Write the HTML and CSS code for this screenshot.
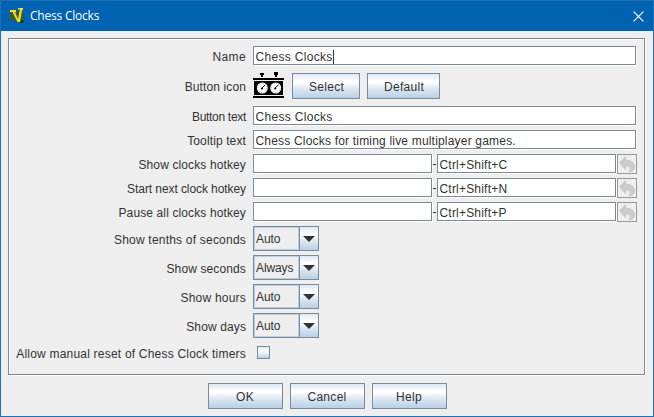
FILE: index.html
```
<!DOCTYPE html>
<html lang="en">
<head>
<meta charset="utf-8">
<title>Chess Clocks</title>
<link rel="stylesheet" href="styles.css">
</head>
<body>
<svg class="defs" width="0" height="0" aria-hidden="true">
  <symbol id="undo" viewBox="0 0 18 18"><path d="M1.500 8 7.500 1.500V5C13 5 16.500 7.500 16.500 12c0 2.300-1.200 4.300-3.500 4.500h-2.500c1.500-1 2-2.200 1.700-3.500-.3-1.300-1.700-2-4.700-2v3.500z" stroke="#bebebe" stroke-width=".6"/></symbol>
</svg>
<div class="window">
  <header class="titlebar">
    <svg class="logo" width="16" height="17" viewBox="0 0 16 17">
      <path d="M0 8 2 6l5-1 4-1 3 2 1 4-2 4-3 2-5-3-3 0-2-3z" fill="#365b3b"/>
      <path d="m4 4 5 10 3 2 3-1-1-2-3 1z" fill="#27302b"/>
      <path d="M1 3h6v2H6l3 7 2-9.500H9V1h5v2h-1l-2 12H8.500L3.500 5H1z" fill="#ffdf13"/>
    </svg>
    <span class="title">Chess Clocks</span>
    <svg class="close" width="11" height="11" viewBox="0 0 11 11"><path d="m.6.6 9.800 9.800M10.400.6.6 10.400" stroke="#fff" stroke-width="1.200"/></svg>
  </header>
  <main class="panel">
    <div class="row"><label class="wide">Name</label><div class="field caret"><span>Chess Clocks</span></div></div>
    <div class="row icon-row"><label>Button icon</label>
      <svg class="clock" width="32" height="26" viewBox="0 0 32 26">
        <path d="M7 0h4v2h-1v2H8V2H7zM21-1h4v3h-1v2h-2V2h-1zM0 5h31v2H0zM1 8h29v14H1zM0 23h31v2H0z" fill="#000"/>
        <circle cx="9.300" cy="15" r="5.500" fill="#fff"/><circle cx="22.700" cy="15" r="5.500" fill="#fff"/>
        <path d="m9 15 3-3M22.200 15l3-3" stroke="#000" stroke-width="1"/>
        <circle cx="9" cy="15.500" r="1.100" fill="#000"/><circle cx="22.200" cy="15.500" r="1.100" fill="#000"/>
        <circle cx="9.300" cy="15" r="4.500" fill="none" stroke="#777" stroke-width=".8" stroke-dasharray=".7 1.656"/>
        <circle cx="22.700" cy="15" r="4.500" fill="none" stroke="#777" stroke-width=".8" stroke-dasharray=".7 1.656"/>
      </svg>
      <div class="button select">Select</div><div class="button default">Default</div></div>
    <div class="row"><label class="tight">Button text</label><div class="field"><span>Chess Clocks</span></div></div>
    <div class="row"><label>Tooltip text</label><div class="field"><span class="long">Chess Clocks for timing live multiplayer games.</span></div></div>
    <div class="row"><label>Show clocks hotkey</label><div class="field key"></div><i>-</i><div class="field key"><span>Ctrl+Shift+C</span></div><div class="undo"><svg><use href="#undo"/></svg></div></div>
    <div class="row"><label class="snug">Start next clock hotkey</label><div class="field key"></div><i>-</i><div class="field key"><span>Ctrl+Shift+N</span></div><div class="undo"><svg><use href="#undo"/></svg></div></div>
    <div class="row"><label>Pause all clocks hotkey</label><div class="field key"></div><i>-</i><div class="field key"><span>Ctrl+Shift+P</span></div><div class="undo"><svg><use href="#undo"/></svg></div></div>
    <div class="row combo-row"><label class="loose">Show tenths of seconds</label><div class="combo"><span>Auto</span><b></b></div></div>
    <div class="row combo-row"><label>Show seconds</label><div class="combo"><span>Always</span><b></b></div></div>
    <div class="row combo-row"><label class="loose">Show hours</label><div class="combo"><span>Auto</span><b></b></div></div>
    <div class="row combo-row"><label>Show days</label><div class="combo"><span>Auto</span><b></b></div></div>
    <div class="row check-row"><label class="loose">Allow manual reset of Chess Clock timers</label><div class="check"></div></div>
  </main>
  <footer><div class="button">OK</div><div class="button">Cancel</div><div class="button">Help</div></footer>
</div>
</body>
</html>
```
FILE: styles.css
```
* { box-sizing: border-box; }
body { margin: 0; }
.defs { display: none; }
.window {
  width: 654px; height: 417px;
  border: 1px solid #1a73b8; border-top: 0;
  background: #eee; color: #333;
  font: 12px/14px "Liberation Sans", Arial, sans-serif;
  letter-spacing: .3px;
  white-space: nowrap;
}
.titlebar {
  height: 31px; border-top: 1px solid #1a73b8; background: #0063b1; color: #fff;
  display: flex; align-items: center; padding: 0 9px 0 8px;
}
.logo { margin: -2px 5px 0 0; }
.title { font: 12px/16px "Open Sans", sans-serif; letter-spacing: -.22px; flex: 1; }
.panel {
  margin: 7px 8px 0 7px; height: 337px; padding: 7px 0 0;
  border: 1px solid #7a8a99; box-shadow: 1px 1px 0 #fff, inset 1px 1px 0 #fff;
}
.row { display: flex; height: 19px; margin-bottom: 5px; align-items: center; }
label { width: 237px; margin-right: 7px; padding-top: 2px; text-align: right; letter-spacing: .12px; }
.wide { letter-spacing: .35px; }
.loose { letter-spacing: .21px; }
.snug { letter-spacing: -.08px; }
.tight { letter-spacing: -.3px; }
.field {
  width: 383px; height: 19px; border: 1px solid #7a8a99; background: #fff;
  box-shadow: 1px 1px 0 #fff; padding: 3px 0 0 1.500px; letter-spacing: .32px;
}
.field span { display: inline-block; height: 14px; }
.caret span { border-right: 1px solid #333; }
.field .long { letter-spacing: .19px; }
.key { width: 179px; letter-spacing: .2px; }
i { width: 5px; font-style: normal; text-align: center; letter-spacing: 0; padding-top: 1px; }
.undo { width: 20px; height: 20px; border: 1px solid #999; margin: 1px 0 0 1px; background: #eee; }
.undo svg { display: block; width: 18px; height: 18px; fill: #ccc; }
.button {
  width: 75px; height: 26px; border: 1px solid #7a8a99;
  background: linear-gradient(#dde8f3 0, #fff 30%, #fff 35%, #dde8f3 60%, #b8cfe5 100%);
  text-align: center; line-height: 26px;
}
.icon-row { height: 26px; margin: 8px 0 7px; }
.clock { margin-right: 7px; overflow: visible; }
.select { width: 68px; margin-right: 7px; padding-left: 1px; }
.default { width: 73px; padding-left: 1px; }
.combo-row { height: 25px; margin-bottom: 4px; }
.combo { width: 66px; height: 25px; display: flex; border: 1px solid #7a8a99; }
.combo span { width: 45px; border: 1px solid #b8cfe5; padding: 4px 0 0 1px; letter-spacing: -.1px; }
.combo b {
  flex: 1; border-left: 1px solid #7a8a99; display: flex; align-items: center; justify-content: center;
  background: linear-gradient(#dde8f3 0, #fff 30%, #fff 35%, #dde8f3 60%, #b8cfe5 100%);
}
.combo b::after { content: ""; border: 6px solid transparent; border-top-color: #333; border-bottom: 0; }
.check-row { height: 13px; margin-top: 8px; }
.check { width: 13px; height: 13px; margin-left: 4px; border: 1px solid #7a8a99; background: linear-gradient(#dde8f3, #fff 35%, #b8cfe5); }
footer { display: flex; justify-content: center; gap: 7px; margin-top: 8px; }
```
